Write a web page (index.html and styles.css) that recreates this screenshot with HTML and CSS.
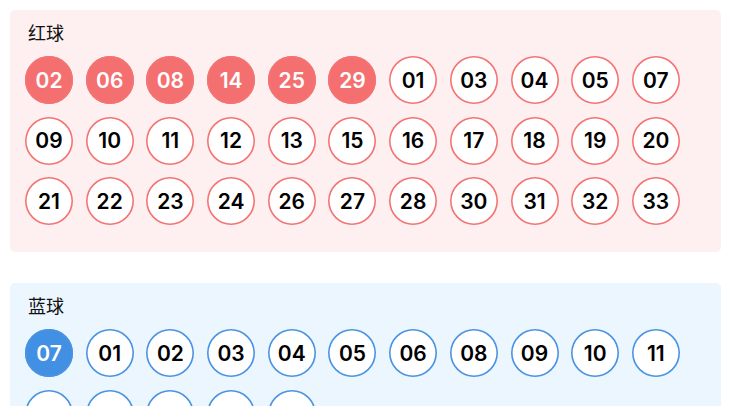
FILE: index.html
```html
<!DOCTYPE html>
<html lang="zh">
<head>
<meta charset="utf-8">
<link rel="stylesheet" href="styles.css">
</head>
<body>
<div class="page">
  <section class="card card-red">
    <div class="title">红球</div>
    <div class="balls">
      <span class="ball red on">02</span><span class="ball red on">06</span><span class="ball red on">08</span><span class="ball red on">14</span><span class="ball red on">25</span><span class="ball red on">29</span><span class="ball red">01</span><span class="ball red">03</span><span class="ball red">04</span><span class="ball red">05</span><span class="ball red">07</span>
      <span class="ball red">09</span><span class="ball red">10</span><span class="ball red">11</span><span class="ball red">12</span><span class="ball red">13</span><span class="ball red">15</span><span class="ball red">16</span><span class="ball red">17</span><span class="ball red">18</span><span class="ball red">19</span><span class="ball red">20</span>
      <span class="ball red">21</span><span class="ball red">22</span><span class="ball red">23</span><span class="ball red">24</span><span class="ball red">26</span><span class="ball red">27</span><span class="ball red">28</span><span class="ball red">30</span><span class="ball red">31</span><span class="ball red">32</span><span class="ball red">33</span>
    </div>
  </section>
  <section class="card card-blue">
    <div class="title">蓝球</div>
    <div class="balls">
      <span class="ball blue on">07</span><span class="ball blue">01</span><span class="ball blue">02</span><span class="ball blue">03</span><span class="ball blue">04</span><span class="ball blue">05</span><span class="ball blue">06</span><span class="ball blue">08</span><span class="ball blue">09</span><span class="ball blue">10</span><span class="ball blue">11</span>
      <span class="ball blue">12</span><span class="ball blue">13</span><span class="ball blue">14</span><span class="ball blue">15</span><span class="ball blue">16</span>
    </div>
  </section>
</div>
</body>
</html>
```
FILE: styles.css
```css
html, body {
  margin: 0;
  padding: 0;
  background: #ffffff;
}
.page {
  padding: 10px 20px 10px 10px;
  display: flex;
  flex-direction: column;
  gap: 31px;
  font-family: "Noto Sans CJK SC", "Liberation Sans", sans-serif;
}
.card {
  border-radius: 5px;
  padding: 11px 15px 27px 15px;
}
.card-red { background: #fef0f0; }
.card-blue { background: #ebf6ff; }
.title {
  font-size: 18px;
  line-height: 22px;
  color: #111;
  padding-left: 3px;
  margin-bottom: 13px;
}
.balls {
  display: flex;
  flex-wrap: wrap;
  column-gap: 12.7px;
  row-gap: 12.7px;
}
.ball {
  box-sizing: border-box;
  width: 48px;
  height: 48px;
  border-radius: 50%;
  background: #fff;
  display: flex;
  align-items: center;
  justify-content: center;
  font-family: Inter, "Liberation Sans", sans-serif;
  font-weight: 600;
  font-size: 21px;
  color: #000;
}
.ball.red { box-shadow: inset 0 0 0 1.6px #f47373; }
.ball.blue { box-shadow: inset 0 0 0 1.6px #4a93e3; }
.ball.red.on { background: #f47070; color: #fff; }
.ball.blue.on { background: #4190e3; color: #fff; }
```
